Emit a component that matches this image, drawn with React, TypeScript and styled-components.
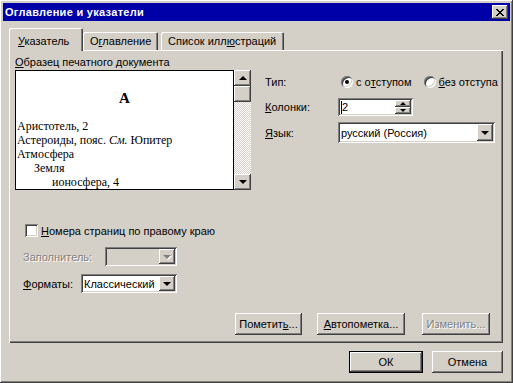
import styled, { createGlobalStyle, css } from "styled-components";

const GlobalStyle = createGlobalStyle`
  html, body { margin:0; padding:0; background:#d4d0c8; }
  body {
    font-family: "Liberation Sans", Arial, sans-serif;
    font-size:11px;
    color:#000;
  }
  * { box-sizing:border-box; }
`;

const raised = css`
  background:#d4d0c8;
  box-shadow: inset -1px -1px #404040, inset 1px 1px #fff, inset -2px -2px #808080, inset 2px 2px #d4d0c8;
`;

const sunken = css`
  box-shadow: inset 1px 1px #808080, inset -1px -1px #fff, inset 2px 2px #404040, inset -2px -2px #d4d0c8;
`;

const Window = styled.div`
    width:513px;
    height:383px;
    padding:3px;
    display:flex;
    flex-direction:column;
    ${raised}
`;

const TitleBar = styled.div`
    height:18px;
    background:#0000a8;
    color:#fff;
    font-weight:bold;
    letter-spacing:0.3px;
    display:flex;
    align-items:center;
    justify-content:space-between;
    padding:0 2px 0 2px;
`;

const CloseButton = styled.div`
    width:16px;
    height:14px;
    display:flex;
    align-items:center;
    justify-content:center;
    ${raised}
`;

const Body = styled.div`
    flex:1;
    display:flex;
    flex-direction:column;
    padding:7px 7px 0 6px;
`;

const TabRow = styled.div`
    height:22px;
    display:flex;
    align-items:flex-end;
    position:relative;
    z-index:1;
`;

const Tab = styled.div<{ $active?: boolean; $w: number; $ml?: number }>`
    width:${p => p.$w}px;
    margin-left:${p => p.$ml || 0}px;
    height:${p => (p.$active ? 23 : 18)}px;
    margin-bottom:${p => (p.$active ? -1 : 0)}px;
    padding:${p => (p.$active ? "7px 0 0 9px" : "3px 0 0 7px")};
    line-height:13px;
    background:#d4d0c8;
    border-radius:2px 2px 0 0;
    box-shadow: inset 1px 1px #fff, inset -1px 0 #404040, inset -2px 0 #808080;
    white-space:nowrap;
`;

const Panel = styled.div`
    height:293px;
    display:flex;
    flex-direction:column;
    padding:6px 13px 8px 6px;
    box-shadow: inset 1px 1px #fff, inset -1px -1px #404040, inset -2px -2px #808080;
`;

const SampleLabel = styled.div`
    height:14px;
    line-height:13px;
`;

const TopSection = styled.div`
    display:flex;
    align-items:flex-start;
`;

const Preview = styled.div`
    width:236px;
    height:120px;
    flex-shrink:0;
    display:flex;
`;

const Page = styled.div`
    flex:1;
    background:#fff;
    border:1px solid #000;
    overflow:hidden;
    padding-top:17px;
    font-family:"Liberation Serif", "Times New Roman", serif;
    font-size:12px;
    line-height:14px;
`;

const Letter = styled.div`
    font-size:15px;
    line-height:20px;
    font-weight:bold;
    text-align:center;
    margin-bottom:11px;
`;

const Entry = styled.div<{ $indent: number }>`
    padding-left:${p => p.$indent}px;
    white-space:nowrap;
`;

const ScrollBar = styled.div`
    width:17px;
    display:flex;
    flex-direction:column;
    background-color:#fff;
    background-image:repeating-conic-gradient(#d4d0c8 0 25%, #fff 0 50%);
    background-size:2px 2px;
`;

const ScrollButton = styled.div<{ $grow?: boolean }>`
    height:16px;
    display:flex;
    align-items:center;
    justify-content:center;
    margin-bottom:${p => (p.$grow ? "auto" : "0")};
    ${raised}
`;

const Arrow = styled.span<{ $up?: boolean; $disabled?: boolean }>`
    width:0;
    height:0;
    border-left:4px solid transparent;
    border-right:4px solid transparent;
    ${p => (p.$up
        ? `border-bottom:4px solid ${p.$disabled ? "#808080" : "#000"};`
        : `border-top:4px solid ${p.$disabled ? "#808080" : "#000"};`)}
    ${p => p.$disabled && "filter:drop-shadow(1px 1px 0 #fff);"}
`;

const RightColumn = styled.div`
    flex:1;
    min-width:0;
    margin-left:14px;
    padding-top:5px;
    display:flex;
    flex-direction:column;
`;

const Field = styled.div<{ $mt?: number; $h: number }>`
    display:flex;
    align-items:center;
    height:${p => p.$h}px;
    margin-top:${p => p.$mt || 0}px;
`;

const FieldLabel = styled.span<{ $w: number; $disabled?: boolean }>`
    width:${p => p.$w}px;
    flex-shrink:0;
    white-space:nowrap;
    color:${p => (p.$disabled ? "#808080" : "#000")};
    text-shadow:${p => (p.$disabled ? "1px 1px 0 #fff" : "none")};
`;

const RadioItem = styled.label<{ $ml?: number }>`
    display:flex;
    align-items:center;
    flex-shrink:0;
    margin-left:${p => p.$ml || 0}px;
    white-space:nowrap;
`;

const RadioCircle = styled.span<{ $checked?: boolean }>`
    width:12px;
    height:12px;
    border-radius:50%;
    background:#fff;
    margin-right:3px;
    position:relative;
    box-shadow: inset 1px 1px #808080, inset -1px -1px #fff, inset 2px 2px #404040, inset -2px -2px #d4d0c8;
    &::after {
        content:"";
        display:${p => (p.$checked ? "block" : "none")};
        position:absolute;
        left:4px;
        top:4px;
        width:4px;
        height:4px;
        border-radius:50%;
        background:#000;
    }
`;

const SpinBox = styled.div`
    width:75px;
    height:18px;
    background:#fff;
    padding:2px;
    display:flex;
    ${sunken}
`;

const SpinText = styled.div`
    flex:1;
    display:flex;
    align-items:center;
    padding-left:1px;
    &::before {
        content:"";
        width:1px;
        height:13px;
        background:#000;
    }
`;

const SpinButtons = styled.div`
    width:16px;
    display:flex;
    flex-direction:column;
`;

const SpinButton = styled.div`
    flex:1;
    display:flex;
    align-items:center;
    justify-content:center;
    ${raised}
`;

const SmallArrow = styled.span<{ $up?: boolean }>`
    width:0;
    height:0;
    border-left:3px solid transparent;
    border-right:3px solid transparent;
    ${p => (p.$up ? "border-bottom:3px solid #000;" : "border-top:3px solid #000;")}
`;

const Combo = styled.div<{ $w: number; $h: number; $disabled?: boolean }>`
    width:${p => p.$w}px;
    height:${p => p.$h}px;
    flex-shrink:0;
    padding:2px;
    display:flex;
    background:${p => (p.$disabled ? "#d4d0c8" : "#fff")};
    ${sunken}
`;

const ComboText = styled.div`
    flex:1;
    display:flex;
    align-items:center;
    padding-left:1px;
    white-space:nowrap;
    overflow:hidden;
`;

const DropButton = styled.div`
    width:16px;
    display:flex;
    align-items:center;
    justify-content:center;
    ${raised}
`;

const CheckRow = styled.label`
    display:flex;
    align-items:center;
    height:13px;
    margin-top:34px;
    padding-left:10px;
`;

const CheckBox = styled.span`
    width:13px;
    height:13px;
    background:#fff;
    margin-right:3px;
    ${sunken}
`;

const LowerField = styled.div<{ $mt: number }>`
    display:flex;
    align-items:center;
    margin-top:${p => p.$mt}px;
    padding-left:8px;
`;

const ButtonRow = styled.div`
    margin-top:auto;
    display:flex;
    justify-content:flex-end;
`;

const Button = styled.div<{ $w: number; $ml?: number; $disabled?: boolean; $default?: boolean }>`
    width:${p => p.$w}px;
    height:22px;
    margin-left:${p => p.$ml || 0}px;
    display:flex;
    align-items:center;
    justify-content:center;
    white-space:nowrap;
    color:${p => (p.$disabled ? "#808080" : "#000")};
    text-shadow:${p => (p.$disabled ? "1px 1px 0 #fff" : "none")};
    ${raised}
    ${p => p.$default && css`
        box-shadow: inset 0 0 0 1px #000, inset -2px -2px #404040, inset 2px 2px #fff, inset -3px -3px #808080;
    `}
`;

const Footer = styled.div`
    margin-top:8px;
    display:flex;
    justify-content:flex-end;
`;

const CloseGlyph = () => {
    const rows = [[0, 1, 6, 7], [1, 2, 5, 6], [2, 3, 4, 5], [3, 4], [2, 3, 4, 5], [1, 2, 5, 6], [0, 1, 6, 7]];
    return (
        <svg width="8" height="7" viewBox="0 0 8 7" shapeRendering="crispEdges">
            {rows.map((cols, y) => cols.map(x => <rect key={`${x}-${y}`} x={x} y={y} width="1" height="1" fill="#000" />))}
        </svg>
    );
};

const entries = [
    { text: <>Аристотель, 2</>, indent: 1 },
    { text: <>Астероиды, пояс. <i>См.</i> Юпитер</>, indent: 1 },
    { text: <>Атмосфера</>, indent: 1 },
    { text: <>Земля</>, indent: 18 },
    { text: <>ионосфера, 4</>, indent: 36 },
];

export default function App() {
    return <>
        <GlobalStyle />
        <Window>
            <TitleBar>
                <span>Оглавление и указатели</span>
                <CloseButton><CloseGlyph /></CloseButton>
            </TitleBar>
            <Body>
                <TabRow>
                    <Tab $active $w={74}><u>У</u>казатель</Tab>
                    <Tab $w={75}>О<u>г</u>лавление</Tab>
                    <Tab $w={123} $ml={3}>Список илл<u>ю</u>страций</Tab>
                </TabRow>
                <Panel>
                    <SampleLabel><u>О</u>бразец печатного документа</SampleLabel>
                    <TopSection>
                        <Preview>
                            <Page>
                                <Letter>А</Letter>
                                {entries.map((e, i) => <Entry key={i} $indent={e.indent}>{e.text}</Entry>)}
                            </Page>
                            <ScrollBar>
                                <ScrollButton><Arrow $up /></ScrollButton>
                                <ScrollButton $grow />
                                <ScrollButton><Arrow /></ScrollButton>
                            </ScrollBar>
                        </Preview>
                        <RightColumn>
                            <Field $h={14}>
                                <FieldLabel $w={76}>Тип:</FieldLabel>
                                <RadioItem><RadioCircle $checked />с о<u>т</u>ступом</RadioItem>
                                <RadioItem $ml={12}><RadioCircle /><u>б</u>ез отступа</RadioItem>
                            </Field>
                            <Field $h={18} $mt={9}>
                                <FieldLabel $w={73}><u>К</u>олонки:</FieldLabel>
                                <SpinBox>
                                    <SpinText>2</SpinText>
                                    <SpinButtons>
                                        <SpinButton><SmallArrow $up /></SpinButton>
                                        <SpinButton><SmallArrow /></SpinButton>
                                    </SpinButtons>
                                </SpinBox>
                            </Field>
                            <Field $h={21} $mt={6}>
                                <FieldLabel $w={73}><u>Я</u>зык:</FieldLabel>
                                <Combo $w={157} $h={21}>
                                    <ComboText>русский (Россия)</ComboText>
                                    <DropButton><Arrow /></DropButton>
                                </Combo>
                            </Field>
                        </RightColumn>
                    </TopSection>
                    <CheckRow><CheckBox /><u>Н</u>омера страниц по правому краю</CheckRow>
                    <LowerField $mt={10}>
                        <FieldLabel $w={82} $disabled>Заполнитель:</FieldLabel>
                        <Combo $w={72} $h={19} $disabled>
                            <ComboText />
                            <DropButton><Arrow $disabled /></DropButton>
                        </Combo>
                    </LowerField>
                    <LowerField $mt={8}>
                        <FieldLabel $w={58}><u>Ф</u>орматы:</FieldLabel>
                        <Combo $w={96} $h={19}>
                            <ComboText>Классический</ComboText>
                            <DropButton><Arrow /></DropButton>
                        </Combo>
                    </LowerField>
                    <ButtonRow>
                        <Button $w={67}>Пометит<u>ь</u>...</Button>
                        <Button $w={88} $ml={15}><u>А</u>втопометка...</Button>
                        <Button $w={68} $ml={17} $disabled>Изменить...</Button>
                    </ButtonRow>
                </Panel>
                <Footer>
                    <Button $w={74} $default>ОК</Button>
                    <Button $w={71} $ml={9}>Отмена</Button>
                </Footer>
            </Body>
        </Window>
    </>;
}
